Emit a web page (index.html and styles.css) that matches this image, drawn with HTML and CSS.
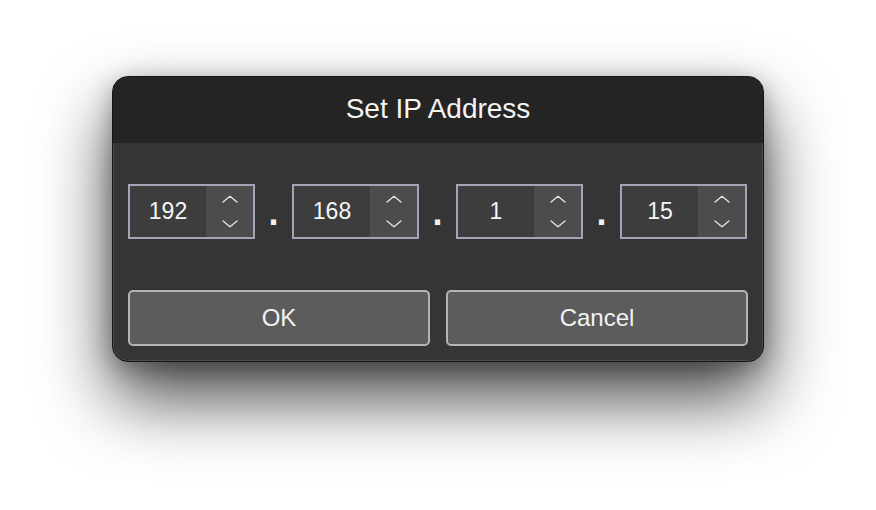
FILE: index.html
```html
<!DOCTYPE html>
<html lang="en">
<head>
<meta charset="utf-8">
<title>Set IP Address</title>
<link rel="stylesheet" href="styles.css">
</head>
<body>
<div class="dialog">
  <div class="titlebar">Set IP Address</div>
  <div class="content">
    <div class="ip-row">
      <div class="spin">
        <div class="spin-value">192</div>
        <div class="spin-steps">
          <span class="step"><svg width="16" height="8" viewBox="0 0 16 8"><path d="M1 7 L8 1.2 L15 7" /></svg></span>
          <span class="step"><svg width="16" height="8" viewBox="0 0 16 8"><path d="M1 1 L8 6.8 L15 1" /></svg></span>
        </div>
      </div>
      <div class="sep"><span>.</span></div>
      <div class="spin">
        <div class="spin-value">168</div>
        <div class="spin-steps">
          <span class="step"><svg width="16" height="8" viewBox="0 0 16 8"><path d="M1 7 L8 1.2 L15 7" /></svg></span>
          <span class="step"><svg width="16" height="8" viewBox="0 0 16 8"><path d="M1 1 L8 6.8 L15 1" /></svg></span>
        </div>
      </div>
      <div class="sep"><span>.</span></div>
      <div class="spin">
        <div class="spin-value">1</div>
        <div class="spin-steps">
          <span class="step"><svg width="16" height="8" viewBox="0 0 16 8"><path d="M1 7 L8 1.2 L15 7" /></svg></span>
          <span class="step"><svg width="16" height="8" viewBox="0 0 16 8"><path d="M1 1 L8 6.8 L15 1" /></svg></span>
        </div>
      </div>
      <div class="sep"><span>.</span></div>
      <div class="spin">
        <div class="spin-value">15</div>
        <div class="spin-steps">
          <span class="step"><svg width="16" height="8" viewBox="0 0 16 8"><path d="M1 7 L8 1.2 L15 7" /></svg></span>
          <span class="step"><svg width="16" height="8" viewBox="0 0 16 8"><path d="M1 1 L8 6.8 L15 1" /></svg></span>
        </div>
      </div>
    </div>
    <div class="buttons">
      <button class="btn">OK</button>
      <button class="btn">Cancel</button>
    </div>
  </div>
</div>
</body>
</html>
```
FILE: styles.css
```css
html, body {
  margin: 0;
  padding: 0;
  background: #ffffff;
}
body {
  display: flex;
  justify-content: center;
  align-items: flex-start;
  padding-top: 76px;
  height: 510px;
  box-sizing: border-box;
  overflow: hidden;
  font-family: "Liberation Sans", Arial, sans-serif;
}
.dialog {
  width: 652px;
  box-sizing: border-box;
  border: 1px solid #161616;
  border-radius: 16px;
  background: #353535;
  overflow: hidden;
  box-shadow: inset 0 0 0 1px #4c4c4c, 0 36px 70px rgba(0, 0, 0, 0.72), 0 6px 24px rgba(0, 0, 0, 0.3);
}
.titlebar {
  height: 66px;
  box-sizing: border-box;
  background: #242424;
  color: #f4f4f4;
  font-size: 28px;
  display: flex;
  align-items: center;
  justify-content: center;
  padding-bottom: 2px;
}
.content {
  padding: 41px 15px 15px 15px;
}
.ip-row {
  display: flex;
  height: 55px;
}
.spin {
  width: 127px;
  height: 55px;
  box-sizing: border-box;
  border: 2px solid #a8a2b9;
  display: flex;
}
.spin-value {
  width: 76px;
  background: #3d3d3d;
  color: #f5f5f5;
  font-size: 23px;
  display: flex;
  align-items: center;
  justify-content: center;
  padding-bottom: 1px;
  box-sizing: border-box;
}
.spin-steps {
  flex: 1;
  background: #4c4c4c;
  display: flex;
  flex-direction: column;
}
.step {
  flex: 1;
  display: flex;
  align-items: center;
  justify-content: center;
}
.step svg path {
  fill: none;
  stroke: #e2e2e2;
  stroke-width: 1.4;
  stroke-linecap: round;
  stroke-linejoin: round;
}
.sep {
  width: 37px;
  display: flex;
  align-items: center;
  justify-content: center;
  color: #f0f0f0;
}
.sep span {
  font-size: 36px;
  font-weight: bold;
  line-height: 1;
  margin-top: 2px;
}
.buttons {
  display: flex;
  gap: 16px;
  margin-top: 51px;
}
.btn {
  flex: 1;
  height: 56px;
  box-sizing: border-box;
  border: 2px solid #b4b4b4;
  border-radius: 5px;
  background: #5c5c5c;
  color: #f2f2f2;
  font-family: "Liberation Sans", Arial, sans-serif;
  font-size: 24px;
  padding: 0 0 1px 0;
}
```
